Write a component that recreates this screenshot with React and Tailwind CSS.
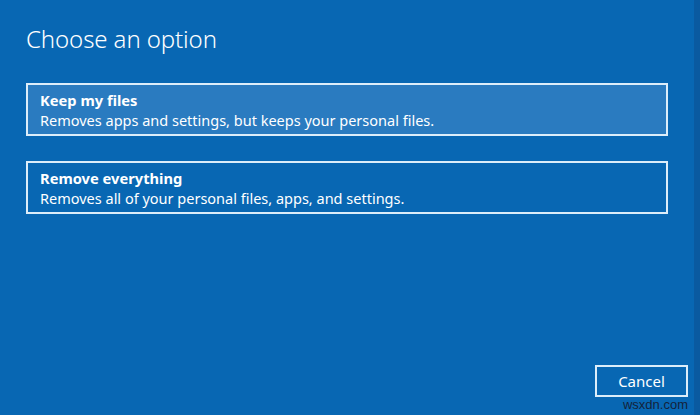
export default function App() {
  return (
    <div className="w-[700px] h-[415px] bg-[#0867b3] flex text-white overflow-hidden" style={{ fontFamily: '"Noto Sans", "Open Sans", sans-serif' }}>
      <div className="flex-1 flex flex-col pl-[26px] pr-[26px] pt-[21px] pb-[3px]">
        <h1 className="text-[24px] font-light leading-[36px] tracking-[-0.1px]">Choose an option</h1>
        <div className="mt-[26px] flex flex-col gap-[25px]">
          <div className="h-[53px] border-2 border-[#dcedfa] bg-[#2a7bc0] px-[12px] pt-[5px] flex flex-col">
            <div className="text-[14.7px] font-bold leading-[20px]">Keep my files</div>
            <div className="text-[14.5px] leading-[21px]">Removes apps and settings, but keeps your personal files.</div>
          </div>
          <div className="h-[53px] border-2 border-[#dcedfa] px-[12px] pt-[5px] flex flex-col">
            <div className="text-[14.7px] font-bold leading-[20px]">Remove everything</div>
            <div className="text-[14.5px] leading-[21px]">Removes all of your personal files, apps, and settings.</div>
          </div>
        </div>
        <div className="flex-1" />
        <div className="flex flex-col items-end">
          <div className="w-[93px] h-[32px] border-2 border-[#dcedfa] flex items-center justify-center text-[15px] mr-[-20px]">Cancel</div>
          <div className="text-[13px] leading-[14px] text-[#14233a] mr-[-20px] mt-[1px]" style={{ fontFamily: '"Liberation Sans", sans-serif' }}>wsxdn.com</div>
        </div>
      </div>
      <div className="w-[6px] bg-[#0a5aa0]" />
    </div>
  );
}
